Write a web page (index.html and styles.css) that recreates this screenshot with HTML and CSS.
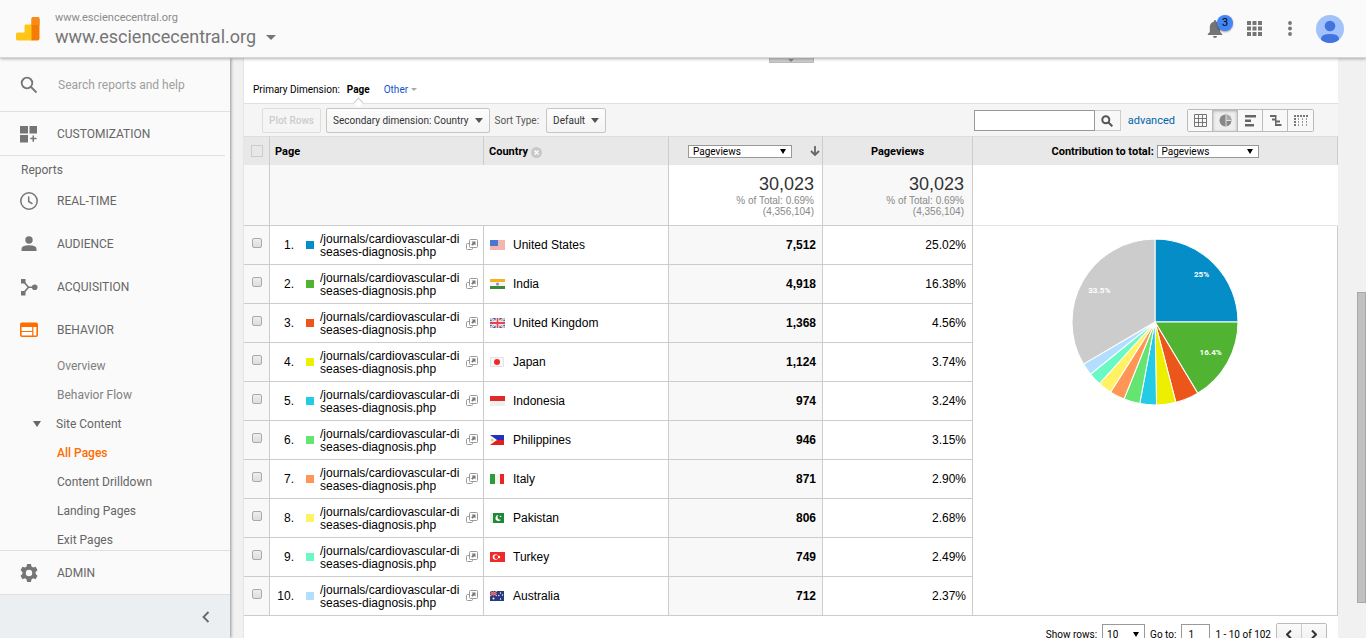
FILE: index.html
```html
<!doctype html>
<html lang="en">
<head>
    <meta charset="UTF-8">
    <title>Pages - Analytics</title>
    <link rel="stylesheet" href="styles.css">
</head>
<body>
    <svg class="defs" width="0" height="0">
        <symbol id="open" viewBox="0 0 12 12">
            <path d="M3.500 4.500h-2q-1 0-1 1v4q0 1 1 1h4q1 0 1-1v-1" fill="none" stroke="#999"/>
            <rect x="3.500" y=".5" width="8" height="8" rx="1" fill="#fff" stroke="#999"/>
            <path d="M5.500 2.500h4v4l-1.300-1.300-1.700 1.600-1.300-1.300 1.600-1.700z" fill="#777"/>
        </symbol>
    </svg>
    <header class="header">
        <svg class="logo" viewBox="0 0 24 24" width="24" height="24">
            <path d="M1.500 15.500h7V9q0-1.500 1.500-1.500h6V23.500H2Q0 23.500 0 22v-5q0-1.500 1.500-1.500z" fill="#ffc517"/>
            <path d="M15.500 2q0-2 2-2h4q2 0 2 2v19.500q0 2-2 2h-6z" fill="#f57c00"/>
            <path d="M15.500 2q0-2 2-2h4q2 0 2 2v6h-8z" fill="#f98b16"/>
        </svg>
        <div class="account">
            <div class="account-name">www.esciencecentral.org</div>
            <button class="property">www.esciencecentral.org</button>
        </div>
        <button class="icon-btn bell" aria-label="Notifications">
            <svg viewBox="0 0 16 20" width="16" height="20"><path d="M8 1q1.300 0 1.300 1.700C12 3.500 13.200 5.500 13.200 8v5l2 2v1H.8v-1l2-2V8c0-2.500 1.200-4.500 3.900-5.300Q6.700 1 8 1zM6 17h4q0 2-2 2t-2-2z" fill="#757575"/></svg>
            <span class="badge">3</span>
        </button>
        <button class="icon-btn" aria-label="Apps">
            <svg viewBox="0 0 15 15" width="15" height="15" fill="#757575"><path d="M0 0h4v4H0zM5.500 0h4v4h-4zM11 0h4v4h-4zM0 5.500h4v4H0zM5.500 5.500h4v4h-4zM11 5.500h4v4h-4zM0 11h4v4H0zM5.500 11h4v4h-4zM11 11h4v4h-4z"/></svg>
        </button>
        <button class="icon-btn" aria-label="More">
            <svg viewBox="0 0 6 15" width="6" height="15" fill="#757575"><circle cx="4" cy="2" r="1.900"/><circle cx="4" cy="7.500" r="1.900"/><circle cx="4" cy="13" r="1.900"/></svg>
        </button>
        <button class="icon-btn" aria-label="Profile">
            <svg viewBox="0 0 28 28" width="28" height="28"><clipPath id="av"><circle cx="14" cy="14" r="14"/></clipPath><circle cx="14" cy="14" r="14" fill="#a1c2fa"/><circle cx="14" cy="11" r="5.300" fill="#4274e0"/><path d="M5 28v-4q0-5 9-5t9 5v4z" fill="#4274e0" clip-path="url(#av)"/></svg>
        </button>
    </header>

    <div class="layout">
        <aside class="sidebar">
            <label class="search">
                <svg viewBox="0 0 18 18" width="18" height="18" fill="none" stroke="#757575" stroke-width="1.800"><circle cx="7" cy="7" r="5.300"/><path d="M11 11l5.500 5.500"/></svg>
                <input type="text" placeholder="Search reports and help" aria-label="Search reports and help">
            </label>
            <a class="item custom" href="#">
                <svg viewBox="0 0 18 18" width="18" height="18" fill="#757575"><path d="M0 1h8v7.500H0zM9.500 1H17v7.500H9.500zM0 10h8v7.500H0zM12.500 10.500h1.500v2.300h2.500v1.500H14v2.500h-1.500v-2.500H10.300v-1.500h2.200z"/></svg>
                CUSTOMIZATION
            </a>
            <nav class="nav">
                <div class="nav-title">Reports</div>
                <a class="item" href="#">
                    <svg viewBox="0 0 18 18" width="18" height="18" fill="none" stroke="#757575" stroke-width="1.500"><circle cx="9" cy="9" r="8.200"/><path d="M8.700 4.500v5l3.800 2.300"/></svg>
                    REAL-TIME
                </a>
                <a class="item" href="#">
                    <svg viewBox="0 0 18 18" width="18" height="18" fill="#757575"><circle cx="9" cy="5" r="3.700"/><path d="M1.500 16v-2q0-3.700 7.500-3.700t7.500 3.700v2z"/></svg>
                    AUDIENCE
                </a>
                <a class="item" href="#">
                    <svg viewBox="0 0 18 18" width="18" height="18" fill="#757575"><path d="M1 1h4.500v4.500H1zM1 13h4.500v4.500H1z"/><circle cx="14.700" cy="9.200" r="2.800"/><path d="M3.500 3.500l5 5.700H14M3.500 15l5-5.800" fill="none" stroke="#757575" stroke-width="1.600"/></svg>
                    ACQUISITION
                </a>
                <a class="item" href="#">
                    <svg viewBox="0 0 18 18" width="18" height="18"><rect x=".8" y="2.300" width="16.400" height="13" rx="1.200" fill="#fff" stroke="#ff6d00" stroke-width="1.600"/><path d="M1 2h16v4H1zM12.200 6h1.200v9h-1.200zM1 10h11.500v1H1z" fill="#ff6d00"/></svg>
                    BEHAVIOR
                </a>
                <a class="sub light" href="#">Overview</a>
                <a class="sub light" href="#">Behavior Flow</a>
                <a class="sub group" href="#">Site Content</a>
                <a class="sub active" href="#">All Pages</a>
                <a class="sub" href="#">Content Drilldown</a>
                <a class="sub" href="#">Landing Pages</a>
                <a class="sub" href="#">Exit Pages</a>
            </nav>
            <a class="item admin" href="#">
                <svg viewBox="0 0 18 18" width="18" height="18"><path d="M7.200 0h3.600l.5 2.300 1.600.9 2.300-.8 1.800 3.200-1.800 1.600v1.900l1.800 1.500-1.800 3.200-2.300-.8-1.600 1-.5 2.400H7.200l-.5-2.400-1.600-1-2.300.8L1 10.600l1.800-1.500V7.200L1 5.600l1.800-3.200 2.300.8 1.600-.9z" transform="translate(-.5 0) scale(1.060 1.100)" fill="#757575"/><circle cx="9" cy="9" r="3.200" fill="#fafafa"/></svg>
                ADMIN
            </a>
            <button class="collapse" aria-label="Collapse menu">
                <svg viewBox="0 0 8 12" width="8" height="12" fill="none" stroke="#666" stroke-width="1.800"><path d="M6.500 1L1.500 6l5 5"/></svg>
            </button>
        </aside>

        <main class="panel">
            <button class="drawer" aria-label="Toggle chart"></button>
            <div class="dimensions">
                <span>Primary Dimension:</span>
                <a class="current" href="#">Page</a>
                <a class="other" href="#">Other</a>
            </div>
            <div class="toolbar">
                <button class="btn" disabled>Plot Rows</button>
                <button class="btn drop">Secondary dimension: Country</button>
                <span class="sort-label">Sort Type:</span>
                <button class="btn drop">Default</button>
                <form class="filter">
                    <input type="text" aria-label="Filter rows">
                    <button type="button" aria-label="Search"><svg viewBox="0 0 12 12" width="12" height="12" fill="none" stroke="#555" stroke-width="2"><circle cx="4.800" cy="4.800" r="3.500"/><path d="M7.500 7.500l3.800 3.800"/></svg></button>
                </form>
                <a class="advanced" href="#">advanced</a>
                <div class="tabs">
                    <button aria-label="Data"><svg viewBox="0 0 13 13" width="13" height="13" fill="none" stroke="#777"><path d="M.5.5h12v12H.5zM4.500 0v13M8.500 0v13M0 4.500h13M0 8.500h13"/></svg></button>
                    <button class="on" aria-label="Percentage"><svg viewBox="0 0 13 13" width="13" height="13"><circle cx="6.500" cy="6.500" r="6" fill="#888"/><path d="M7 .5a6 6 0 0 1 5.500 5.500H7z" fill="#aaa"/><path d="M7 1v11M7 6.500h5.500" stroke="#ddd"/></svg></button>
                    <button aria-label="Performance"><svg viewBox="0 0 13 13" width="13" height="13" fill="#666"><path d="M1 1h11v2.500H1zM1 5.500h6V8H1zM1 10h9v2.500H1z"/></svg></button>
                    <button aria-label="Comparison"><svg viewBox="0 0 13 13" width="13" height="13" fill="#666"><path d="M1 1h6v2H1zM3 4.500h4v2H3zM7 6.500h4v2H7zM7 10h5.500v2H7zM6 1h1.500v11H6z"/></svg></button>
                    <button aria-label="Pivot"><svg viewBox="0 0 14 12" width="14" height="12" fill="#777"><path d="M0 0h2v2H0zM3 0h2v2H3zM6 0h2v2H6zM9 0h2v2H9zM12 0h2v2h-2zM0 3h2v2H0zM0 6h2v2H0zM0 9h2v2H0z"/><path d="M4.500 3v9M8.500 3v9M12.500 3v9" stroke="#999" stroke-dasharray="2 1"/></svg></button>
                </div>
            </div>

            <table class="data">
                <colgroup>
                    <col class="c-check"><col class="c-page"><col class="c-country"><col class="c-views"><col class="c-share"><col>
                </colgroup>
                <thead>
                    <tr>
                        <th><input type="checkbox" class="all" aria-label="Select all rows"></th>
                        <th class="left">Page</th>
                        <th class="left">Country <svg class="remove" viewBox="0 0 11 11" width="11" height="11"><circle cx="5.500" cy="5.500" r="5.500" fill="#c8c8c8"/><path d="M3.500 3.500l4 4M7.500 3.500l-4 4" stroke="#fff" stroke-width="1.300"/></svg></th>
                        <th>
                            <div class="metric">
                                <span class="pick"><select aria-label="Metric"><option>Pageviews</option></select></span>
                                <svg viewBox="0 0 10 10" width="10" height="10" fill="none" stroke="#666" stroke-width="1.800"><path d="M5 0v9M1 5l4 4 4-4"/></svg>
                            </div>
                        </th>
                        <th>Pageviews</th>
                        <th><label for="contrib">Contribution to total:</label> <span class="pick"><select id="contrib"><option>Pageviews</option></select></span></th>
                    </tr>
                </thead>
                <tbody>
                    <tr class="total">
                        <td></td>
                        <td colspan="2"></td>
                        <td><div class="sum">30,023</div>% of Total: 0.69%<br>(4,356,104)</td>
                        <td><div class="sum">30,023</div>% of Total: 0.69%<br>(4,356,104)</td>
                        <td></td>
                    </tr>
                    <tr>
                        <td class="check"><input type="checkbox" aria-label="Row 1"></td>
                        <td><div class="page"><span class="rank">1.</span><i class="swatch s1"></i><span class="path">/journals/cardiovascular-diseases-diagnosis.php</span><svg class="open"><use href="#open"/></svg></div></td>
                        <td><div class="country"><svg class="flag" viewBox="0 0 15 10"><path d="M0 0h15v10H0z" fill="#fff"/><path d="M0 1h15M0 3h15M0 5h15M0 7h15M0 9h15" stroke="#e66d62"/><path d="M0 0h8v6H0z" fill="#4a78d0"/></svg>United States</div></td>
                        <td class="views">7,512</td>
                        <td class="share">25.02%</td>
                        <td class="chart" rowspan="10">
                            <svg viewBox="0 0 166 166" width="168" height="168">
                                <g stroke="#fff" stroke-width="1">
                                    <path d="M83 83V1A82 82 0 0 1 165 83z" fill="#058dc7"/>
                                    <path d="M83 83H165A82 82 0 0 1 125.200 153.300z" fill="#50b432"/>
                                    <path d="M83 83L125.200 153.300A82 82 0 0 1 103.600 162.400z" fill="#ed561b"/>
                                    <path d="M83 83L103.600 162.400A82 82 0 0 1 84.500 165z" fill="#edef00"/>
                                    <path d="M83 83L84.500 165A82 82 0 0 1 67.900 163.600z" fill="#24cbe5"/>
                                    <path d="M83 83L67.900 163.600A82 82 0 0 1 52.400 159.100z" fill="#64e572"/>
                                    <path d="M83 83L52.400 159.100A82 82 0 0 1 39.100 152.300z" fill="#ff9655"/>
                                    <path d="M83 83L39.100 152.300A82 82 0 0 1 28.100 143.900z" fill="#fff263"/>
                                    <path d="M83 83L28.100 143.900A82 82 0 0 1 19.300 134.600z" fill="#6af9c4"/>
                                    <path d="M83 83L19.300 134.600A82 82 0 0 1 12.300 124.600z" fill="#b2deff"/>
                                    <path d="M83 83L12.300 124.600A82 82 0 0 1 83 1z" fill="#ccc"/>
                                </g>
                                <g class="pie-text">
                                    <text x="129" y="39">25%</text>
                                    <text x="138" y="116">16.4%</text>
                                    <text x="28" y="54">33.5%</text>
                                </g>
                            </svg>
                        </td>
                    </tr>
                    <tr>
                        <td class="check"><input type="checkbox" aria-label="Row 2"></td>
                        <td><div class="page"><span class="rank">2.</span><i class="swatch s2"></i><span class="path">/journals/cardiovascular-diseases-diagnosis.php</span><svg class="open"><use href="#open"/></svg></div></td>
                        <td><div class="country"><svg class="flag" viewBox="0 0 15 10"><path d="M0 0h15v3H0z" fill="#f5b21b"/><path d="M0 3h15v4H0z" fill="#f4f4f4"/><path d="M0 7h15v3H0z" fill="#3c8a35"/><circle cx="7.500" cy="5" r="1.500" fill="#8a8ac8"/></svg>India</div></td>
                        <td class="views">4,918</td>
                        <td class="share">16.38%</td>
                    </tr>
                    <tr>
                        <td class="check"><input type="checkbox" aria-label="Row 3"></td>
                        <td><div class="page"><span class="rank">3.</span><i class="swatch s3"></i><span class="path">/journals/cardiovascular-diseases-diagnosis.php</span><svg class="open"><use href="#open"/></svg></div></td>
                        <td><div class="country"><svg class="flag" viewBox="0 0 15 10"><path d="M0 0h15v10H0z" fill="#4a62a8"/><path d="M0 0l15 10M15 0L0 10" stroke="#fff" stroke-width="2.200"/><path d="M0 0l15 10M15 0L0 10" stroke="#d8555c" stroke-width=".7"/><path d="M7.500 0v10M0 5h15" stroke="#fff" stroke-width="3.600"/><path d="M7.500 0v10M0 5h15" stroke="#e04850" stroke-width="1.800"/></svg>United Kingdom</div></td>
                        <td class="views">1,368</td>
                        <td class="share">4.56%</td>
                    </tr>
                    <tr>
                        <td class="check"><input type="checkbox" aria-label="Row 4"></td>
                        <td><div class="page"><span class="rank">4.</span><i class="swatch s4"></i><span class="path">/journals/cardiovascular-diseases-diagnosis.php</span><svg class="open"><use href="#open"/></svg></div></td>
                        <td><div class="country"><svg class="flag" viewBox="0 0 15 10"><path d="M.5.500h13v9H.5z" fill="#f8f8f8" stroke="#e4e4e4"/><circle cx="7" cy="5" r="3" fill="#f02828"/></svg>Japan</div></td>
                        <td class="views">1,124</td>
                        <td class="share">3.74%</td>
                    </tr>
                    <tr>
                        <td class="check"><input type="checkbox" aria-label="Row 5"></td>
                        <td><div class="page"><span class="rank">5.</span><i class="swatch s5"></i><span class="path">/journals/cardiovascular-diseases-diagnosis.php</span><svg class="open"><use href="#open"/></svg></div></td>
                        <td><div class="country"><svg class="flag" viewBox="0 0 15 10"><path d="M0 0h15v5H0z" fill="#e02a2a"/><path d="M0 5h15v5H0z" fill="#efefef"/></svg>Indonesia</div></td>
                        <td class="views">974</td>
                        <td class="share">3.24%</td>
                    </tr>
                    <tr>
                        <td class="check"><input type="checkbox" aria-label="Row 6"></td>
                        <td><div class="page"><span class="rank">6.</span><i class="swatch s6"></i><span class="path">/journals/cardiovascular-diseases-diagnosis.php</span><svg class="open"><use href="#open"/></svg></div></td>
                        <td><div class="country"><svg class="flag" viewBox="0 0 15 10"><path d="M0 0h14v5H0z" fill="#2430c0"/><path d="M0 5h14v5H0z" fill="#e02020"/><path d="M0 0l7 5-7 5z" fill="#f6f6f6"/><circle cx="2.300" cy="5" r="1.200" fill="#f0d040"/></svg>Philippines</div></td>
                        <td class="views">946</td>
                        <td class="share">3.15%</td>
                    </tr>
                    <tr>
                        <td class="check"><input type="checkbox" aria-label="Row 7"></td>
                        <td><div class="page"><span class="rank">7.</span><i class="swatch s7"></i><span class="path">/journals/cardiovascular-diseases-diagnosis.php</span><svg class="open"><use href="#open"/></svg></div></td>
                        <td><div class="country"><svg class="flag" viewBox="0 0 15 10"><path d="M0 0h5v10H0z" fill="#2f9a3a"/><path d="M5 0h5v10H5z" fill="#f4f4f4"/><path d="M10 0h4v10h-4z" fill="#ec2424"/></svg>Italy</div></td>
                        <td class="views">871</td>
                        <td class="share">2.90%</td>
                    </tr>
                    <tr>
                        <td class="check"><input type="checkbox" aria-label="Row 8"></td>
                        <td><div class="page"><span class="rank">8.</span><i class="swatch s8"></i><span class="path">/journals/cardiovascular-diseases-diagnosis.php</span><svg class="open"><use href="#open"/></svg></div></td>
                        <td><div class="country"><svg class="flag" viewBox="0 0 15 10"><path d="M0 0h3v10H0z" fill="#eee"/><path d="M3 0h11v10H3z" fill="#1e8a34"/><path d="M8.500 2a3 3 0 1 0 2.500 4.500A2.600 2.600 0 0 1 8.500 2z" fill="#fff"/><circle cx="10.500" cy="3.500" r=".8" fill="#fff"/></svg>Pakistan</div></td>
                        <td class="views">806</td>
                        <td class="share">2.68%</td>
                    </tr>
                    <tr>
                        <td class="check"><input type="checkbox" aria-label="Row 9"></td>
                        <td><div class="page"><span class="rank">9.</span><i class="swatch s9"></i><span class="path">/journals/cardiovascular-diseases-diagnosis.php</span><svg class="open"><use href="#open"/></svg></div></td>
                        <td><div class="country"><svg class="flag" viewBox="0 0 15 10"><path d="M0 0h15v10H0z" fill="#f02a2a"/><circle cx="5.500" cy="5" r="2.800" fill="#fff"/><circle cx="6.300" cy="5" r="2" fill="#f02a2a"/><circle cx="9" cy="5" r="1.200" fill="#fff"/></svg>Turkey</div></td>
                        <td class="views">749</td>
                        <td class="share">2.49%</td>
                    </tr>
                    <tr>
                        <td class="check"><input type="checkbox" aria-label="Row 10"></td>
                        <td><div class="page"><span class="rank">10.</span><i class="swatch s10"></i><span class="path">/journals/cardiovascular-diseases-diagnosis.php</span><svg class="open"><use href="#open"/></svg></div></td>
                        <td><div class="country"><svg class="flag" viewBox="0 0 15 10"><path d="M0 0h14v10H0z" fill="#273a80"/><path d="M0 0l7 5M7 0L0 5" stroke="#e8c8d0"/><path d="M3.500 0v5M0 2.500h7" stroke="#e05860" stroke-width="1.300"/><g fill="#fff"><circle cx="3.500" cy="7.500" r="1"/><circle cx="10.500" cy="2" r=".7"/><circle cx="12.500" cy="4" r=".7"/><circle cx="8.800" cy="4.500" r=".7"/><circle cx="10.500" cy="8" r=".7"/></g></svg>Australia</div></td>
                        <td class="views">712</td>
                        <td class="share">2.37%</td>
                    </tr>
                </tbody>
            </table>

            <div class="pager">
                <label for="rows">Show rows:</label>
                <span class="pick tall"><select id="rows"><option>10</option></select></span>
                <label for="goto">Go to:</label>
                <input id="goto" type="text" value="1">
                <span class="range">1 - 10 of 102</span>
                <div class="steps">
                    <button aria-label="Previous"><svg viewBox="0 0 6 9" width="6" height="9" fill="none" stroke="#333" stroke-width="2"><path d="M5 .5l-4 4 4 4"/></svg></button>
                    <button aria-label="Next"><svg viewBox="0 0 6 9" width="6" height="9" fill="none" stroke="#333" stroke-width="2"><path d="M1 .5l4 4-4 4"/></svg></button>
                </div>
            </div>
        </main>
        <div class="scroll-thumb"></div>
    </div>
</body>
</html>
```
FILE: styles.css
```css
*{box-sizing:border-box;}

body{
    margin:0;
    height:100vh;
    overflow:hidden;
    display:flex;
    flex-direction:column;
    background:#f1f1f1;
    font-family:Roboto, sans-serif;
    font-size:11px;
    color:#000;
}
button,input,select{font:inherit;color:inherit;margin:0;}
button{padding:0;cursor:pointer;}
a{text-decoration:none;color:inherit;}
svg{flex:none;display:block;}
.defs{position:absolute;}

/* top bar */
.header{
    position:relative;
    z-index:2;
    flex:none;
    display:flex;
    align-items:center;
    height:58px;
    padding:0 22px 0 16px;
    background:#fafafa;
    border-bottom:1px solid #d6d6d6;
    box-shadow:0 1px 3px rgba(0,0,0,.3);
}
.account{
    flex:1;
    padding:2px 0 0 15px;
    color:#757575;
}
.account-name{
    color:#8a8a8a;
    line-height:14px;
    padding-top:1px;
}
.property{
    display:flex;
    align-items:center;
    gap:10px;
    border:0;
    background:none;
    font-size:18px;
    line-height:24px;
}
.property:after{
    content:"";
    border:5px solid transparent;
    border-top-color:#757575;
    border-bottom:0;
}
.icon-btn{
    position:relative;
    border:0;
    background:none;
    margin-left:24px;
}
.badge{
    position:absolute;
    left:10px;
    top:-4px;
    width:16px;
    height:16px;
    border-radius:50%;
    background:#4285f4;
    box-shadow:0 1px 2px rgba(0,0,0,.4);
    line-height:15px;
    text-align:center;
}

.layout{
    position:relative;
    flex:1;
    min-height:0;
    display:flex;
}

/* left menu */
.sidebar{
    flex:none;
    width:230px;
    display:flex;
    flex-direction:column;
    background:#fafafa;
    box-shadow:1px 0 3px rgba(0,0,0,.4);
    font-size:12px;
    color:#666;
}
.search{
    flex:none;
    display:flex;
    align-items:center;
    height:54px;
    padding-left:20px;
    gap:20px;
    border-bottom:1px solid #e0e0e0;
}
.search input{
    width:150px;
    padding:0;
    border:0;
    background:none;
}
.search input::placeholder{color:#9e9e9e;}
.item{
    flex:none;
    display:flex;
    align-items:center;
    height:43px;
    padding-left:20px;
    gap:19px;
}
.custom{
    height:44px;
    margin-right:5px;
    border-bottom:1px solid #e0e0e0;
}
.nav{
    flex:1;
    min-height:0;
    overflow:hidden;
}
.nav-title{
    height:23px;
    padding:7px 0 0 21px;
    line-height:14px;
}
.sub{
    display:flex;
    align-items:center;
    height:29px;
    padding-left:57px;
}
.light{color:#808080;}
.group{
    padding-left:33px;
    gap:15px;
}
.group:before{
    content:"";
    border:4px solid transparent;
    border-top:6px solid #666;
    border-bottom:0;
}
.active{
    color:#ff6d00;
    font-weight:500;
}
.admin{
    height:45px;
    border:1px solid #e0e0e0;
    border-width:1px 0;
}
.collapse{
    flex:none;
    display:flex;
    align-items:center;
    justify-content:flex-end;
    height:43px;
    padding-right:20px;
    border:0;
    background:#eceff1;
}

/* report */
.panel{
    flex:1;
    min-width:0;
    margin:0 28px 0 13px;
    border-left:1px solid #e5e5e5;
    background:#fff;
}
.drawer{
    display:block;
    width:45px;
    height:5px;
    margin:0 auto;
    border:1px solid #bbb;
    border-top:0;
    background:#ccc;
}
.drawer:after{
    content:"";
    display:block;
    width:0;
    margin:0 auto;
    border:3px solid transparent;
    border-top-color:#888;
    border-bottom:0;
}
.dimensions{
    display:flex;
    align-items:center;
    height:40px;
    padding:13px 0 0 9px;
    gap:7px;
    font-size:10px;
}
.current{
    position:relative;
    font-weight:700;
}
.current:after{
    position:absolute;
    left:8px;
    top:15px;
    width:6px;
    height:6px;
    content:"";
    background:#fff;
    border:1px solid #ccc;
    border-width:1px 0 0 1px;
    transform:rotate(45deg);
}
.other{
    display:flex;
    align-items:center;
    gap:3px;
    margin-left:7px;
    color:#15c;
}
.other:after{
    content:"";
    border:3px solid transparent;
    border-top-color:#aaa;
    border-bottom:0;
}
.toolbar{
    display:flex;
    align-items:center;
    height:33px;
    padding:1px 24px 0 18px;
    border-top:1px solid #e0e0e0;
    background:#f5f5f5;
    font-size:10px;
}
.btn{
    display:flex;
    align-items:center;
    height:25px;
    margin-right:5px;
    padding:0 6px;
    border:1px solid #c6c6c6;
    border-radius:2px;
    background:linear-gradient(#fdfdfd,#f4f4f4);
    color:#333;
}
.btn:disabled{
    border-color:#ddd;
    background:#f5f5f5;
    color:#ccc;
    font-weight:500;
}
.drop{gap:6px;}
.drop:after{
    content:"";
    border:4px solid transparent;
    border-top:5px solid #555;
    border-bottom:0;
}
.sort-label{
    margin-right:7px;
    color:#555;
}
.filter{
    display:flex;
    margin-left:auto;
}
.filter input{
    width:121px;
    height:21px;
    border:1px solid #999;
    background:#fff;
}
.filter button{
    display:flex;
    align-items:center;
    justify-content:center;
    width:26px;
    height:21px;
    border:1px solid #ccc;
    border-left:0;
    background:#f8f8f8;
}
.advanced{
    margin:0 12px 0 7px;
    font-size:11px;
    color:#0065a8;
}
.tabs{
    display:flex;
    border:1px solid #bbb;
    border-radius:2px;
}
.tabs button{
    display:flex;
    align-items:center;
    justify-content:center;
    width:25px;
    height:21px;
    border:0;
    border-right:1px solid #bbb;
    background:#f8f8f8;
}
.tabs button:last-child{border-right:0;}
.tabs .on{
    background:#eee;
    box-shadow:inset 0 1px 3px rgba(0,0,0,.3);
}

.data{
    width:100%;
    table-layout:fixed;
    border-collapse:separate;
    border-spacing:0;
    font-family:"Liberation Sans", Arial, sans-serif;
    font-size:12px;
}
.c-check{width:26px;}
.c-page{width:214px;}
.c-country{width:185px;}
.c-views{width:154px;}
.c-share{width:150px;}
.data th{
    height:29px;
    padding:0;
    border-top:1px solid #ddd;
    border-right:1px solid #ccc;
    background:#e8e8e8;
    font:bold 11px Roboto, sans-serif;
}
.data .left{
    padding-left:5px;
    text-align:left;
}
.data input[type=checkbox]{
    appearance:none;
    display:block;
    width:10px;
    height:10px;
    margin:0 auto;
    border:1px solid #aaa;
    border-radius:2px;
    background:linear-gradient(#eee,#ddd);
}
.data .all[type=checkbox]{
    width:12px;
    height:12px;
    border-color:#ccc;
    border-radius:0;
    background:none;
}
.remove{
    display:inline-block;
    vertical-align:-3px;
}
.metric{
    display:flex;
    align-items:center;
    justify-content:flex-end;
    gap:18px;
    padding-right:2px;
}
.pick{
    position:relative;
    display:inline-block;
    font-weight:400;
    font-size:10px;
}
.pick select{
    appearance:none;
    display:block;
    width:104px;
    height:13px;
    padding:0 4px;
    border:1px solid #999;
    border-radius:0;
    background:#fff;
    line-height:11px;
}
.pick:after{
    position:absolute;
    right:6px;
    top:4px;
    content:"";
    border:3px solid transparent;
    border-top:5px solid #000;
    border-bottom:0;
    pointer-events:none;
}
.pick #contrib{width:102px;}
.data td{
    height:39px;
    padding:0;
    border-right:1px solid #ccc;
    border-bottom:1px solid #ccc;
}
.data .total td{
    height:61px;
    padding-right:8px;
    background:#f8f8f8;
    text-align:right;
    font-size:10px;
    line-height:11px;
    color:#888;
}
.data .total td:nth-child(3){background:#fff;}
.data .total td:last-child{
    background:#fff;
    border-right:0;
    border-bottom-color:#e5e5e5;
}
.sum{
    font-size:18px;
    line-height:22px;
    color:#333;
}
.data .check{
    background:#f8f8f8;
    padding-bottom:4px;
}
.page{
    display:flex;
    align-items:center;
}
.rank{
    width:24px;
    text-align:right;
}
.swatch{
    width:8px;
    height:8px;
    margin:0 6px 0 12px;
}
.s1{background:#058dc7;}
.s2{background:#50b432;}
.s3{background:#ed561b;}
.s4{background:#edef00;}
.s5{background:#24cbe5;}
.s6{background:#64e572;}
.s7{background:#ff9655;}
.s8{background:#fff263;}
.s9{background:#6af9c4;}
.s10{background:#b2deff;}
.path{
    width:144px;
    margin-right:2px;
    padding-top:1px;
    line-height:13px;
    word-break:break-all;
}
.open{
    width:12px;
    height:12px;
}
.country{
    display:flex;
    align-items:center;
    gap:8px;
    padding-left:6px;
}
.flag{
    width:15px;
    height:10px;
}
.data .views{
    padding-right:6px;
    background:#f8f8f8;
    text-align:right;
    font-weight:bold;
}
.data .share{
    padding-right:6px;
    text-align:right;
}
.data .chart{
    padding-top:12px;
    vertical-align:top;
}
.chart svg{margin:0 auto;}
.pie-text{
    font:bold 8px Roboto, sans-serif;
    fill:#fff;
    text-anchor:middle;
}

.pager{
    display:flex;
    align-items:center;
    justify-content:flex-end;
    padding:7px 11px 0 0;
    gap:5px;
    font-size:10px;
}
.pager .tall select{
    width:43px;
    height:21px;
}
.pager .tall:after{top:8px;}
.pager input{
    width:29px;
    height:21px;
    padding:0 6px;
    border:1px solid #999;
    background:#fff;
}
.steps{
    display:flex;
    border:1px solid #bbb;
    border-radius:2px;
}
.steps button{
    display:flex;
    align-items:center;
    justify-content:center;
    width:24px;
    height:21px;
    border:0;
    background:linear-gradient(#fafafa,#eee);
}
.steps button + button{
    width:25px;
    border-left:1px solid #ccc;
}

.scroll-thumb{
    position:absolute;
    right:0;
    top:234px;
    width:9px;
    height:311px;
    background:#c1c1c1;
    border:1px solid #a8a8a8;
}
```
